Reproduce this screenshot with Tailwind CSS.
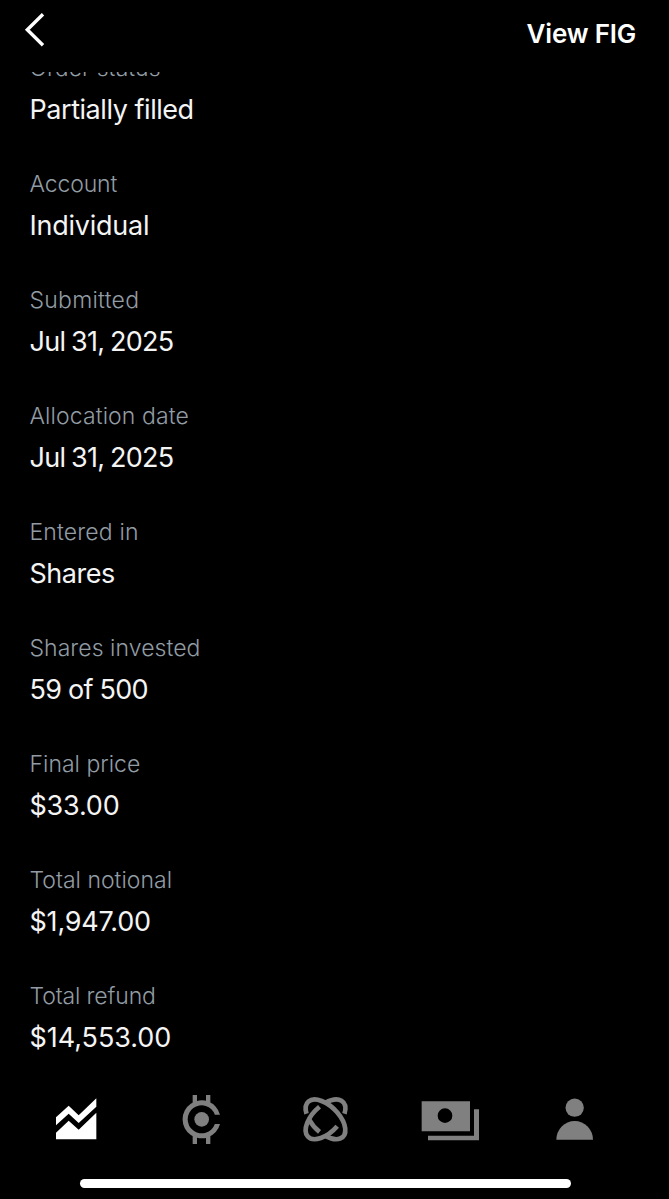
<!doctype html>
<html lang="en">

<head>
  <meta charset="UTF-8" />
  <meta name="viewport" content="width=device-width, initial-scale=1.0" />
  <title>Order details</title>
  <script src="https://cdn.jsdelivr.net/npm/@tailwindcss/browser@4"></script>
</head>

<body class="bg-black">
  <div class="flex flex-col w-[669px] h-[1199px] bg-black text-white overflow-hidden font-['Inter',sans-serif]">
    <header class="flex justify-between h-[72px] shrink-0 pl-6 pr-[33px]">
      <button aria-label="Back" class="mt-[12px] h-9">
        <svg class="w-6 h-9" viewBox="0 0 24 36" fill="none" stroke="currentColor" stroke-width="3.4">
          <path d="M19 2.3 3.3 17.8 19 33.2" />
        </svg>
      </button>
      <button class="mt-[14px] h-10 leading-10 text-[26px] font-semibold whitespace-nowrap"><span class="tracking-[-0.2px]">View FIG</span></button>
    </header>

    <!-- Order details, first row scrolled under the header -->
    <main class="h-[1006px] shrink-0 overflow-hidden pl-[29.5px]">
      <dl class="-mt-5 flex flex-col gap-[38px] whitespace-nowrap">
        <div>
          <dt class="h-8 leading-8 text-[23px] font-light text-[#929ca4]">Order status</dt>
          <dd class="mt-1.5 h-10 leading-10 text-[27px] tracking-[-0.45px] text-[#f4f4f4]">Partially filled</dd>
        </div>
        <div>
          <dt class="h-8 leading-8 text-[23px] font-light text-[#929ca4] tracking-[-0.15px]">Account</dt>
          <dd class="mt-1.5 h-10 leading-10 text-[27px] tracking-[-0.25px] text-[#f4f4f4]">Individual</dd>
        </div>
        <div>
          <dt class="h-8 leading-8 text-[23px] font-light text-[#929ca4] tracking-[0.25px]">Submitted</dt>
          <dd class="mt-1.5 h-10 leading-10 text-[27px] tracking-[-0.75px] [word-spacing:-1px] text-[#f4f4f4]">Jul 31, 2025</dd>
        </div>
        <div>
          <dt class="h-8 leading-8 text-[23px] font-light text-[#929ca4] tracking-[0.1px]">Allocation date</dt>
          <dd class="mt-1.5 h-10 leading-10 text-[27px] tracking-[-0.75px] [word-spacing:-1px] text-[#f4f4f4]">Jul 31, 2025</dd>
        </div>
        <div>
          <dt class="h-8 leading-8 text-[23px] font-light text-[#929ca4] tracking-[0.15px]">Entered in</dt>
          <dd class="mt-1.5 h-10 leading-10 text-[27px] tracking-[-0.5px] text-[#f4f4f4]">Shares</dd>
        </div>
        <div>
          <dt class="h-8 leading-8 text-[23px] font-light text-[#929ca4] tracking-[0.05px]">Shares invested</dt>
          <dd class="mt-1.5 h-10 leading-10 text-[27px] tracking-[-0.75px] text-[#f4f4f4]">59 of 500</dd>
        </div>
        <div>
          <dt class="h-8 leading-8 text-[23px] font-light text-[#929ca4]">Final price</dt>
          <dd class="mt-1.5 h-10 leading-10 text-[27px] tracking-[-0.2px] text-[#f4f4f4]">$33.00</dd>
        </div>
        <div>
          <dt class="h-8 leading-8 text-[23px] font-light text-[#929ca4]">Total notional</dt>
          <dd class="mt-1.5 h-10 leading-10 text-[27px] tracking-[-0.2px] text-[#f4f4f4]">$1,947.00</dd>
        </div>
        <div>
          <dt class="h-8 leading-8 text-[23px] font-light text-[#929ca4] tracking-[-0.15px]">Total refund</dt>
          <dd class="mt-1.5 h-10 leading-10 text-[27px] tracking-[-0.05px] text-[#f4f4f4]">$14,553.00</dd>
        </div>
      </dl>
    </main>

    <!-- Tab bar -->
    <nav class="flex justify-between mt-3 h-[60px] shrink-0 pl-[46px] pr-[64px] text-[#808080]">
      <svg class="size-[60px] text-white" viewBox="19 30 180 180" fill="currentColor">
        <path d="M49 112 87 77 117 106 170 55V80L117 129 87 101 49 136Z" />
        <path d="M49 158 87 122 117 149 170 98V178H49Z" />
      </svg>
      <svg class="size-[60px]" viewBox="33 30 180 180" fill="currentColor">
        <path d="M180 104A57 57 0 1 0 180 132H164.6A42 42 0 1 1 164.6 104Z" />
        <path d="M98 45h13v25H98zM138 45h13v25h-13zM98 166h13v26H98zM138 166h13v26h-13z" />
        <circle cx="125" cy="118" r="22" />
      </svg>
      <svg class="size-[60px]" viewBox="48 30 180 180" fill="none" stroke="currentColor" stroke-width="14">
        <g transform="translate(136.5 118) rotate(45)">
          <path d="M-52 28.5A74 40 0 1 1 35 35.3" />
          <path d="M14 39.3A74 40 0 0 1-35 35.2" />
        </g>
        <g transform="translate(136.5 118) scale(-1 1) rotate(45)">
          <path d="M-52 28.5A74 40 0 0 1-35-35.3" />
          <path d="M-14-39.3A74 40 0 1 1-10 39.6" />
        </g>
      </svg>
      <svg class="size-[60px]" viewBox="60 30 180 180" fill="currentColor">
        <path fill-rule="evenodd" d="M65 64H210V154H65ZM135 85a22 22 0 1 0 0 44a22 22 0 1 0 0-44Z" />
        <path d="M222 88H237V181H84V167H222Z" />
      </svg>
      <svg class="size-[60px]" viewBox="45 30 180 180" fill="currentColor">
        <circle cx="134" cy="83" r="27.5" />
        <path d="M79 179A55 56 0 0 1 189 179Z" />
      </svg>
    </nav>

    <!-- Home indicator -->
    <div class="mt-[28.5px] ml-20 w-[491px] h-[9px] shrink-0 rounded-full bg-white"></div>
  </div>
</body>

</html>
